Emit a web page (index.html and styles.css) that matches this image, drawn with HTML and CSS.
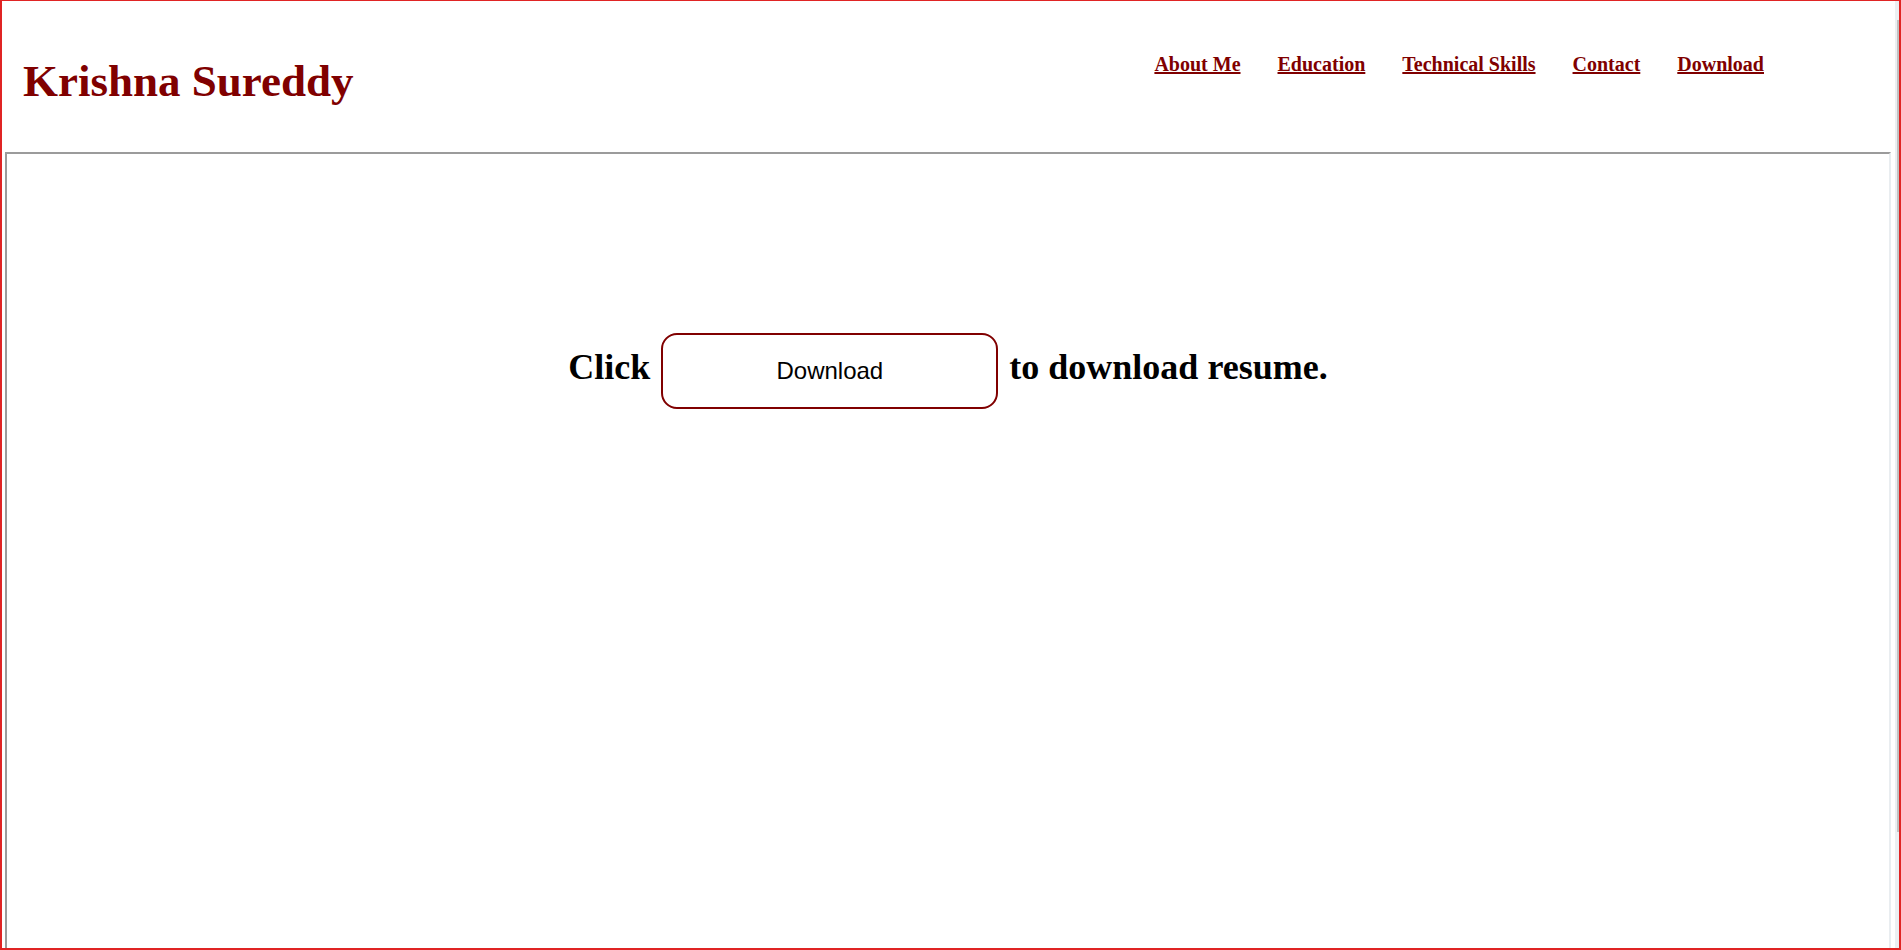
FILE: index.html
```html
<!DOCTYPE html>
<html lang="en">
<head>
<meta charset="utf-8">
<title>Krishna Sureddy</title>
<link rel="stylesheet" href="styles.css">
</head>
<body>
<div class="page">
  <header class="site-header">
    <h1 class="site-title">Krishna Sureddy</h1>
    <nav class="site-nav">
      <a href="#about">About Me</a>
      <a href="#education">Education</a>
      <a href="#skills">Technical Skills</a>
      <a href="#contact">Contact</a>
      <a href="#download">Download</a>
    </nav>
  </header>
  <main class="frame">
    <h2 class="download-line">Click <button class="download-btn" type="button">Download</button> to download resume.</h2>
  </main>
  <div class="scroll-track"><div class="scroll-thumb"></div></div>
</div>
</body>
</html>
```

FILE: styles.css
```css
html, body {
  margin: 0;
  padding: 0;
  background: #ffffff;
}

.page {
  position: relative;
  box-sizing: border-box;
  width: 1901px;
  height: 950px;
  overflow: hidden;
  border-style: solid;
  border-color: #e02424;
  border-width: 1px 2px 2px 2px;
  display: flex;
  flex-direction: column;
  font-family: "Liberation Serif", "Times New Roman", serif;
}

.site-header {
  display: flex;
  justify-content: space-between;
  align-items: flex-start;
  box-sizing: border-box;
  height: 151px;
  padding: 53px 135px 0 21px;
  flex: none;
}

.site-title {
  margin: 5px 0 0 0;
  font-size: 45px;
  line-height: 45px;
  font-weight: bold;
  color: #800000;
}

.site-nav {
  display: flex;
  gap: 37px;
  font-size: 20px;
  line-height: 20px;
  font-weight: bold;
}

.site-nav a {
  color: #800000;
  text-decoration: underline;
}

.frame {
  flex: 1;
  margin: 0 8px 0 3px;
  border-style: solid;
  border-width: 2px 2px 0 2px;
  border-color: #9b9b9b #e9edf0 #e9edf0 #9b9b9b;
  padding-top: 179px;
  text-align: center;
}

.download-line {
  margin: 0;
  font-size: 36px;
  font-weight: bold;
  color: #000000;
}

.download-btn {
  box-sizing: border-box;
  width: 337px;
  height: 76px;
  margin: 0 2px;
  border: 2px solid #800000;
  border-radius: 16px;
  background: #ffffff;
  color: #000000;
  font-family: "Liberation Sans", Arial, sans-serif;
  font-size: 24px;
  font-weight: normal;
  padding: 0;
  vertical-align: baseline;
}

.scroll-track {
  position: absolute;
  top: 0;
  right: 0;
  width: 4px;
  height: 100%;
  background: #eceff2;
}

.scroll-thumb {
  margin-top: 19px;
  margin-left: 2px;
  width: 2px;
  height: 812px;
  background: #c2c2c2;
}
```
